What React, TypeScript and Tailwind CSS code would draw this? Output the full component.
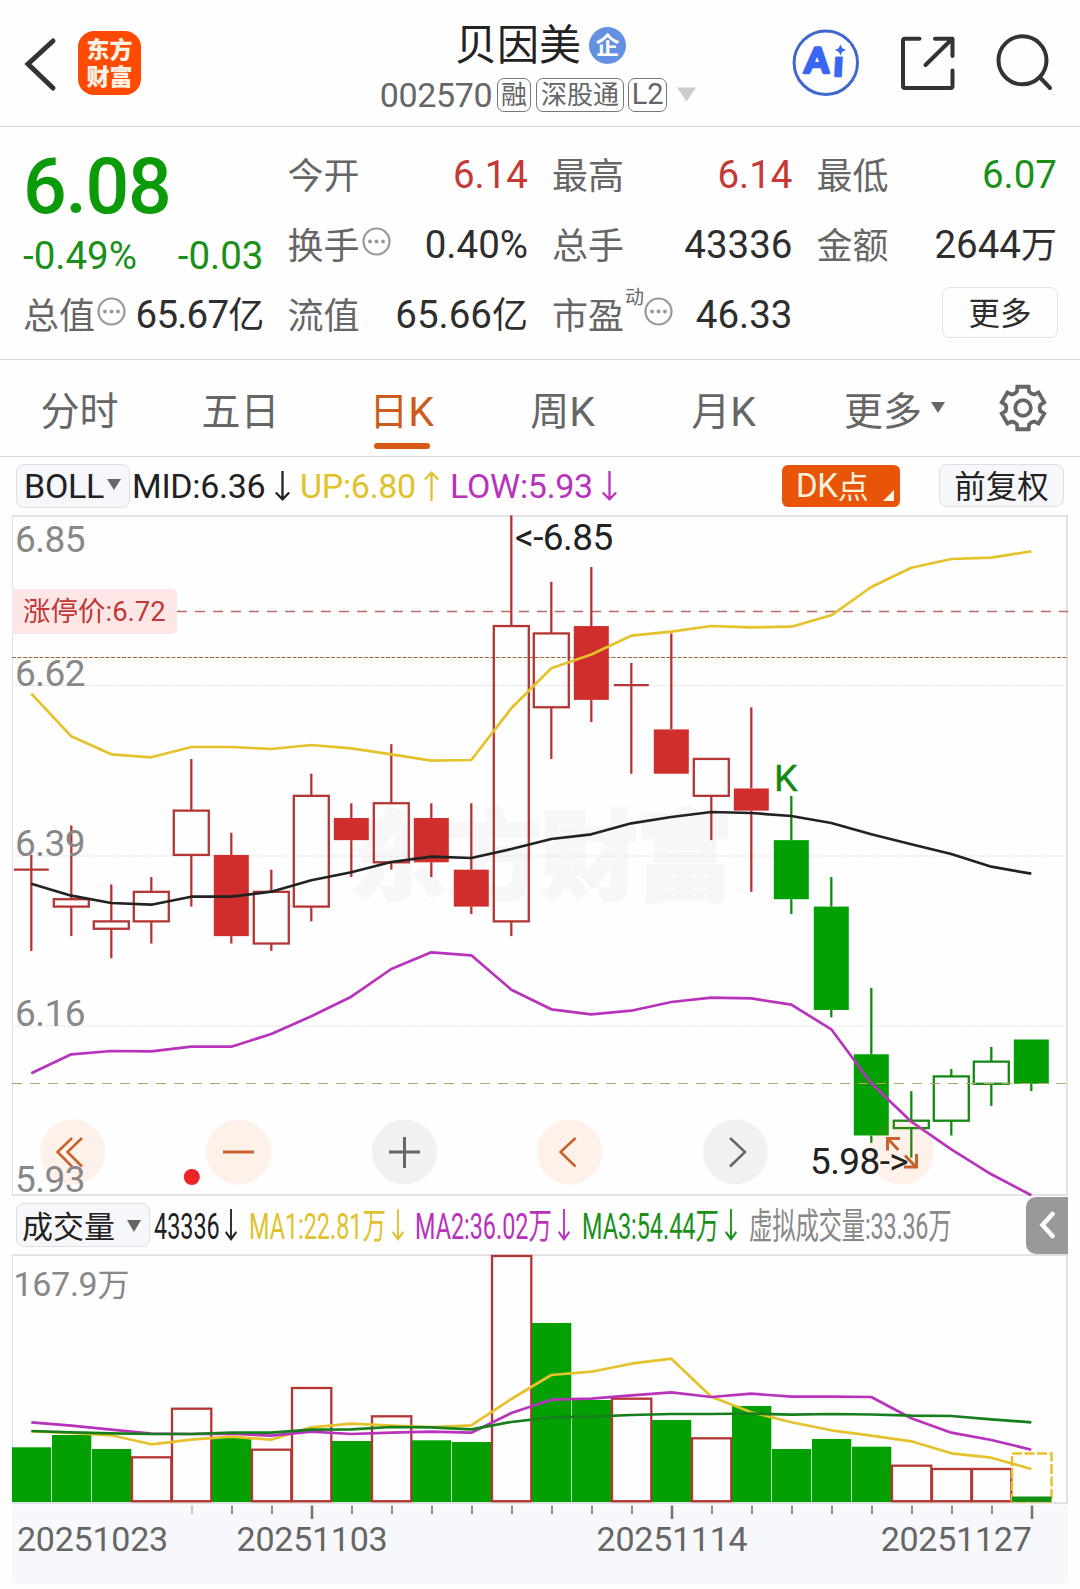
import type { ReactNode } from "react";

const RED = "#b43634";
const GREEN = "#148a14";
const YELLOW = "#e5c22c";
const PURPLE = "#b833bb";

type Candle = { o: number; h: number; l: number; c: number; tone: "red" | "green"; solid: boolean };

function candle(top: number, bottom: number, h: number, l: number, tone: "red" | "green", solid: boolean): Candle {
  return { o: top, c: bottom, h, l, tone, solid };
}

// body top, body bottom, high, low
const CANDLES: Candle[] = [
  candle(6.37, 6.37, 6.39, 6.26, "red", false),
  candle(6.33, 6.32, 6.43, 6.28, "red", false),
  candle(6.3, 6.29, 6.35, 6.25, "red", false),
  candle(6.34, 6.3, 6.36, 6.27, "red", false),
  candle(6.45, 6.39, 6.52, 6.32, "red", false),
  candle(6.39, 6.28, 6.42, 6.27, "red", true),
  candle(6.34, 6.27, 6.37, 6.26, "red", false),
  candle(6.47, 6.32, 6.5, 6.3, "red", false),
  candle(6.44, 6.41, 6.46, 6.36, "red", true),
  candle(6.46, 6.38, 6.54, 6.37, "red", false),
  candle(6.44, 6.38, 6.46, 6.36, "red", true),
  candle(6.37, 6.32, 6.46, 6.31, "red", true),
  candle(6.7, 6.3, 6.85, 6.28, "red", false),
  candle(6.69, 6.59, 6.76, 6.52, "red", false),
  candle(6.7, 6.6, 6.78, 6.57, "red", true),
  candle(6.62, 6.62, 6.65, 6.5, "red", false),
  candle(6.56, 6.5, 6.69, 6.5, "red", true),
  candle(6.52, 6.47, 6.52, 6.41, "red", false),
  candle(6.48, 6.45, 6.59, 6.34, "red", true),
  candle(6.41, 6.33, 6.47, 6.31, "green", true),
  candle(6.32, 6.18, 6.36, 6.17, "green", true),
  candle(6.12, 6.01, 6.21, 6.0, "green", true),
  candle(6.03, 6.02, 6.07, 5.98, "green", false),
  candle(6.09, 6.03, 6.1, 6.01, "green", false),
  candle(6.11, 6.08, 6.13, 6.05, "green", false),
  candle(6.14, 6.08, 6.14, 6.07, "green", true),
];

const UP = [693.7, 736.3, 754.3, 757.3, 747, 747, 749, 745, 748.3, 754.3, 760.7, 760, 708.3, 668.3, 654.5, 635.7, 631.7, 626, 627.3, 626.7, 615.3, 587, 567.7, 559, 557.7, 551.3];
const MID = [883.7, 895.7, 903, 904.7, 896.7, 896.7, 891.7, 880.3, 872.3, 862, 856.7, 858, 849, 839, 834.3, 823.3, 817, 812, 813, 816, 823, 834.3, 844.3, 854, 866.7, 873.7];
const LOW = [1073.3, 1054.3, 1051, 1051.3, 1046.7, 1046.7, 1034, 1016.3, 996.7, 969, 952.3, 955.3, 989.7, 1009.3, 1014.3, 1010.7, 1002, 997.7, 998.3, 1004.7, 1029.3, 1083.3, 1121.7, 1149.3, 1174.3, 1195.3];

const VOLUMES: { y: number; solid: boolean }[] = [
  { y: 1447.3, solid: true },
  { y: 1435, solid: true },
  { y: 1449, solid: true },
  { y: 1457.3, solid: false },
  { y: 1408.7, solid: false },
  { y: 1437, solid: true },
  { y: 1449.7, solid: false },
  { y: 1388, solid: false },
  { y: 1441, solid: true },
  { y: 1416.3, solid: false },
  { y: 1440.3, solid: true },
  { y: 1442, solid: true },
  { y: 1256, solid: false },
  { y: 1323, solid: true },
  { y: 1400, solid: true },
  { y: 1398.7, solid: false },
  { y: 1420, solid: true },
  { y: 1438.3, solid: false },
  { y: 1406, solid: true },
  { y: 1449, solid: true },
  { y: 1439, solid: true },
  { y: 1446.7, solid: true },
  { y: 1465.7, solid: false },
  { y: 1469, solid: false },
  { y: 1469, solid: false },
];

const MA1 = [1431.5, 1433, 1435.3, 1444.3, 1439.7, 1436.7, 1439.7, 1427.3, 1423.7, 1425.7, 1427, 1425.3, 1399, 1375, 1371.7, 1363.7, 1358.7, 1396.7, 1412.3, 1422.3, 1430.3, 1435.7, 1441.3, 1453.3, 1457.7, 1469];
const MA2 = [1422.3, 1425.7, 1429.7, 1433.7, 1434, 1433.7, 1435.7, 1431.7, 1434, 1432.7, 1431.7, 1432.7, 1413, 1399.7, 1398.7, 1395.3, 1392.3, 1397, 1393.7, 1396.7, 1396.7, 1397, 1418.3, 1432.7, 1440, 1449.7];
const MA3 = [1431, 1432.3, 1433.3, 1434, 1434, 1432.7, 1432.7, 1429.7, 1429.3, 1427, 1427.3, 1429.3, 1422, 1417.3, 1416.7, 1415, 1414, 1414, 1413.5, 1414.7, 1414, 1414.5, 1415.7, 1416, 1419.3, 1422.3];

const xAt = (i: number) => 31 + 40 * i;
const yAt = (price: number) => 515.3 + (6.85 - price) * 738.3;
const line = (ys: number[]) => ys.map((y, i) => `${xAt(i) + 0.3},${y}`).join(" ");

function Header() {
  return (
    <header className="flex h-[127px] items-center border-b border-[#d6d6d6]">
      <div className="flex w-[360px] items-center pl-6">
        <svg width="34" height="60" viewBox="24 33 34 60" fill="none" stroke="#333" strokeWidth="5" strokeLinecap="round">
          <path d="M53 41 28 64 53 88" />
        </svg>
        <div className="ml-5 flex h-16 w-[63px] flex-col items-center justify-center rounded-2xl bg-[#fe4a03] pt-px text-[23px] leading-[27px] font-black text-[#fff1e4]">
          <span>东方</span>
          <span>财富</span>
        </div>
      </div>
      <div className="flex w-[360px] flex-col items-center pt-[6px]">
        <div className="flex h-[50px] items-center gap-2 pt-[1px] pl-[1px]">
          <span className="text-[42px] leading-[50px] text-[#222]">贝因美</span>
          <span className="mb-px grid h-[37px] w-[37px] place-items-center rounded-full bg-[#6490e2] text-[24px] leading-none font-bold text-white">
            企
          </span>
        </div>
        <div className="mt-[7px] flex h-[34px] items-center pr-[3px] text-[#666]">
          <span className="mr-[5px] text-[34px] leading-[34px] tracking-[-0.4px]">002570</span>
          <Tag className="mr-[5px] w-[34px]">融</Tag>
          <Tag className="mr-1 w-[88px]">深股通</Tag>
          <Tag className="w-[39px] text-[29px]">L2</Tag>
          <svg className="ml-[9px]" width="21" height="15" viewBox="0 0 21 15" fill="#ccc">
            <path d="M1 .5h19L10.500 14.500z" />
          </svg>
        </div>
      </div>
      <div className="flex w-[360px] justify-end pr-6">
        <svg width="270" height="76" viewBox="786 25 270 76" fill="none">
          <circle cx="825.8" cy="62.700" r="31.700" stroke="#4068cc" strokeWidth="3" />
          <g transform="translate(826 62) skewX(-3) translate(-826 -62)" fontFamily="Lato" fontWeight="900" fill="#3a66f4" stroke="#3a66f4" strokeWidth="2.600" strokeLinejoin="round">
            <text x="804.500" y="73.500" fontSize="35">A</text>
            <text x="834" y="75.800" fontSize="36">i</text>
          </g>
          <path d="M831.500 43h18.500v13.500h-18.500z" fill="#fff" />
          <path d="m840.500 44.500 1.800 3.700 3.700 1.800-3.700 1.800-1.800 3.700-1.800-3.700-3.700-1.800 3.700-1.800z" fill="#3a66f4" />
          <g stroke="#333" strokeWidth="4" strokeLinecap="round" strokeLinejoin="round">
            <path d="M919.500 38.700h-14.500a2 2 0 0 0-2 2V86a2 2 0 0 0 2 2h45.500a2 2 0 0 0 2-2V70.500" />
            <path d="M935 38.700h17.500V56M951 40 925.500 65" />
            <circle cx="1022.500" cy="60.300" r="24" />
            <path d="M1040 77.500 1050 88" />
          </g>
        </svg>
      </div>
    </header>
  );
}

function Tag({ className, children }: { className: string; children: ReactNode }) {
  return (
    <span className={`grid h-[34px] place-items-center rounded-[7px] border border-[#777] text-[26px] leading-none ${className}`}>
      {children}
    </span>
  );
}

function Dots() {
  return (
    <svg className="-mt-[7px] ml-[2px] shrink-0" width="29" height="29" viewBox="0 0 29 29" fill="none">
      <circle cx="14.500" cy="14.500" r="13" stroke="#999" strokeWidth="2.200" />
      <g fill="#999">
        <circle cx="8" cy="14.500" r="2" />
        <circle cx="14.500" cy="14.500" r="2" />
        <circle cx="21" cy="14.500" r="2" />
      </g>
    </svg>
  );
}

function Stat({ label, value, tone = "text-[#2e2e2e]", sup, dots, tight }: { label: string; value: string; tone?: string; sup?: string; dots?: boolean; tight?: boolean }) {
  return (
    <div className="flex h-[70px] items-center">
      <span className="pt-[3px] text-[36px] text-[#666]">{label}</span>
      {sup && <span className="-mr-[2px] -mt-[36px] ml-[1px] text-[19px] text-[#666]">{sup}</span>}
      {dots && <Dots />}
      <span className={`ml-auto flex items-center text-[38.500px] whitespace-nowrap ${tight ? "tracking-[-0.800px]" : ""} ${tone}`}>
        {value.replace(/[亿万]/, "")}
        {/[亿万]/.test(value) && <span className="pt-[2px] text-[36px]">{value.slice(-1)}</span>}
      </span>
    </div>
  );
}

function Quote() {
  return (
    <section className="grid h-[233px] grid-cols-4 gap-x-6 border-b border-[#d6d6d6] pr-[23px] pl-[23px] pt-[13px] leading-none">
      <div>
        <div className="flex h-[92px] items-center pt-[3px] text-[77px] font-medium tracking-[-1.300px] text-[#0a9a0a]">6.08</div>
        <div className="flex h-[48px] items-center justify-between text-[38.500px] text-[#1a901a]">
          <span>-0.49%</span>
          <span>-0.03</span>
        </div>
        <Stat label="总值" value="65.67亿" dots tight />
      </div>
      <div>
        <Stat label="今开" value="6.14" tone="text-[#c63835]" />
        <Stat label="换手" value="0.40%" dots />
        <Stat label="流值" value="65.66亿" />
      </div>
      <div>
        <Stat label="最高" value="6.14" tone="text-[#c63835]" />
        <Stat label="总手" value="43336" />
        <Stat label="市盈" value="46.33" sup="动" dots />
      </div>
      <div>
        <Stat label="最低" value="6.07" tone="text-[#1a901a]" />
        <Stat label="金额" value="2644万" />
        <div className="-mr-px flex h-[65px] items-center justify-end">
          <button className="h-[51px] w-[116px] rounded-lg border border-[#e0e2e4] pt-[4px] text-[31.500px] text-[#2e2e2e]">更多</button>
        </div>
      </div>
    </section>
  );
}

// Six blunt teeth around a ring.
const GEAR = Array.from({ length: 6 }, (_, k) =>
  [
    [-30, 16.6],
    [-20, 17.6],
    [-15, 22],
    [15, 22],
    [20, 17.6],
  ].map(([deg, r]) => {
    const a = ((k * 60 - 90 + deg) * Math.PI) / 180;
    return `${(24 + r * Math.cos(a)).toFixed(2)},${(24 + r * Math.sin(a)).toFixed(2)}`;
  }),
).flat().join(" ");

function Tabs() {
  return (
    <nav className="flex h-[97px] items-center border-b border-[#d6d6d6] text-[39px] leading-none text-[#666]">
      {["分时", "五日", "日K", "周K", "月K"].map((t) => (
        <div key={t} className={`relative flex h-full w-[161px] items-center justify-center pt-[8px] pr-[2px] ${t === "日K" ? "text-[#cc5c1c]" : ""}`}>
          {t.replace("K", "")}
          {t.endsWith("K") && <span className="text-[41px]">K</span>}
          {t === "日K" && <span className="absolute bottom-[7px] left-[52px] h-[6px] w-[56px] rounded-full bg-[#d95a12]" />}
        </div>
      ))}
      <div className="ml-[39px] flex items-center gap-[9px] pt-[8px]">
        更多
        <svg className="-mt-[9px]" width="14" height="11" viewBox="0 0 14 11" fill="#666">
          <path d="M0 0h14L7 11z" />
        </svg>
      </div>
      <svg className="ml-[54px]" width="48" height="48" viewBox="0 0 48 48" fill="none" stroke="#666" strokeWidth="3.800">
        <polygon points={GEAR} />
        <circle cx="24" cy="24" r="7.800" />
      </svg>
    </nav>
  );
}

function Arrow({ up, narrow, className = "" }: { up?: boolean; narrow?: boolean; className?: string }) {
  return (
    <svg
      className={`shrink-0 ${up ? "rotate-180" : ""} ${className}`}
      width={narrow ? 12 : 15}
      height={narrow ? 32 : 30}
      viewBox="0 0 15 30"
      preserveAspectRatio="none"
      fill="none"
      stroke="currentColor"
      strokeWidth="2.300"
    >
      <path d="M7.500 0v28M.8 21.500l6.700 6.800 6.700-6.800" />
    </svg>
  );
}

function BollBar() {
  return (
    <div className="flex h-[58px] items-center pb-[1px] pl-4 text-[34px] leading-none tracking-[-0.300px] text-[#222]">
      <div className="flex h-[44px] w-[114px] items-center gap-[4px] rounded-lg border border-[#dcdfe3] bg-[#f6f7fa] pl-[7px]">
        BOLL
        <svg className="-ml-px -mt-[2px]" width="14" height="11" viewBox="0 0 14 11" fill="#666">
          <path d="M0 0h14L7 11z" />
        </svg>
      </div>
      <span className="ml-[1px] w-[144px] pl-[1px]">MID:6.36</span>
      <Arrow />
      <span className="ml-[10px] flex w-[124px] text-[#e0c22c]">UP:6.80</span>
      <Arrow up className="text-[#e0c22c]" />
      <span className="ml-[11px] w-[152px] text-[#b833bb]">LOW:5.93</span>
      <Arrow className="text-[#b833bb]" />
      <div className="ml-auto flex h-[42px] w-[118px] items-center rounded-[6px] bg-[#e85508] pl-[14px] text-[33px] text-[#fff3dc]">
        DK<span className="pt-[3px] text-[31px]">点</span>
        <svg className="mt-[20px] ml-auto mr-[6px]" width="11" height="11" viewBox="0 0 11 11" fill="#fff8e8">
          <path d="M11 0v11H0z" />
        </svg>
      </div>
      <div className="mr-[16px] ml-[39px] flex h-[43px] w-[125px] items-center justify-center rounded-lg border border-[#dcdfe3] bg-[#f6f7fa] pt-[5px] text-[31.500px] tracking-normal">
        前复权
      </div>
    </div>
  );
}

function CandleMark({ i, d }: { i: number; d: Candle }) {
  const x = xAt(i) + 0.3;
  const stroke = d.tone === "red" ? RED : GREEN;
  const top = yAt(d.o);
  const bottom = yAt(d.c);
  return (
    <g stroke={stroke} strokeWidth="2.300">
      {d.h > d.o && <path d={`M${x} ${yAt(d.h)}V${top}`} />}
      {d.l < d.c && <path d={`M${x} ${bottom}V${yAt(d.l)}`} />}
      {d.o === d.c ? (
        <path d={`M${x - 17.5} ${top}h35`} />
      ) : d.solid ? (
        <rect x={x - 17.5} y={top} width="35" height={bottom - top} fill={d.tone === "red" ? "#d02e2d" : "#02a002"} stroke="none" />
      ) : (
        <rect x={x - 17.5} y={top} width="35" height={bottom - top} fill="none" />
      )}
    </g>
  );
}

function PriceChart() {
  return (
    <svg className="block overflow-visible" width="1080" height="681" viewBox="0 515 1080 681" fill="none">
      <g fontFamily="'Noto Sans CJK SC'" fontWeight="900" fontSize="98" fill="#f7f7f7" stroke="#f7f7f7" strokeWidth="2">
        <text x="349" y="892" textLength="385">东方财富</text>
      </g>
      <g stroke="#dedede" strokeDasharray="2 1.500">
        <path d="M12 685.500H1067M12 856H1067M12 1026H1067" />
      </g>
      <path d="M12.500 516V1195" stroke="#e2e2e2" />
      <path d="M12 516H1067V1195H12" stroke="#e2e2e2" strokeWidth="2" />
      <path d="M12 657.500H1067" stroke="#a3673a" strokeDasharray="4 1.500" />
      <path d="M177 611.500H1068" stroke="#bd6a67" strokeWidth="1.300" strokeDasharray="10 8" />

      {CANDLES.map((d, i) => (
        <CandleMark key={i} i={i} d={d} />
      ))}
      <path d="M12 1083.500H1067" stroke="#b9a272" strokeDasharray="10 8" />
      <g strokeWidth="2.700" strokeLinejoin="round">
        <polyline points={line(UP)} stroke={YELLOW} />
        <polyline points={line(MID)} stroke="#222" />
        <polyline points={line(LOW)} stroke={PURPLE} />
      </g>

      {[72.7, 238.6, 404.5, 569.5, 735.4, 901.5].map((cx, i) => (
        <circle key={cx} cx={cx} cy="1152" r="32.500" fill={i === 2 || i === 4 ? "#888" : "#f26a22"} fillOpacity={i === 2 || i === 4 ? 0.11 : 0.09} />
      ))}
      <g stroke="#c8622c" strokeWidth="2.500">
        <path d="m72 1138-14.500 14 14.500 14.500M82 1138l-14.500 14 14.500 14.500" />
        <path d="M223 1152h31" strokeWidth="3" />
        <path d="m575.500 1138-15 14 15 14.500" />
        <path d="M900 1138.500h-12.500v12M888 1139l10.500 11M904 1167h12.500v-13M916 1167l-11-11.500" strokeWidth="3" />
      </g>
      <g stroke="#666">
        <path d="M389 1152h31M404.500 1137v31" strokeWidth="3" />
        <path d="m730 1138 15 14-15 14.500" strokeWidth="2.500" />
      </g>
      <circle cx="191.800" cy="1177" r="8" fill="#e92525" />

      <path d="M12 589H172a5 5 0 0 1 5 5V629a5 5 0 0 1-5 5H12z" fill="#fde7e6" />
      <text x="23" y="621" fontSize="27.500" fill="#c03936">涨停价:6.72</text>
      <g fontSize="37" letterSpacing="-0.500" fill="#888">
        <text x="15" y="552">6.85</text>
        <text x="15" y="686">6.62</text>
        <text x="15" y="855.500">6.39</text>
        <text x="15" y="1026">6.16</text>
        <text x="15" y="1191.500">5.93</text>
      </g>
      <g fontSize="37" letterSpacing="-0.600" fill="#222">
        <text x="515" y="550">&lt;-6.85</text>
        <text x="810" y="1173.500">5.98-&gt;</text>
      </g>
      <text x="774" y="790.700" fontSize="37.500" fill={GREEN} stroke={GREEN} strokeWidth=".4">K</text>
    </svg>
  );
}

function Squeezed({ width, className, children }: { width: string; className?: string; children: ReactNode }) {
  return (
    <span className={`shrink-0 pt-[3px] whitespace-nowrap ${width} ${className ?? ""}`}>
      <span className="inline-block origin-left scale-x-[0.65]">{children}</span>
    </span>
  );
}

function VolumeBar() {
  return (
    <div className="flex h-[58px] items-center pl-4 text-[36px] leading-none text-[#222]">
      <div className="flex h-[44px] w-[134px] shrink-0 items-center rounded-lg border border-[#dcdfe3] bg-[#f6f7fa] pt-[5px] pl-[5px] text-[31px]">
        成交量
        <svg className="-mt-[3px] ml-[12px]" width="14" height="12" viewBox="0 0 14 12" fill="#666">
          <path d="M0 0h14L7 12z" />
        </svg>
      </div>
      <Squeezed width="w-[71px] ml-1">43336</Squeezed>
      <Arrow narrow />
      <Squeezed width="w-[143px] ml-[12px]" className="text-[#e0c22c]">MA1:22.81万</Squeezed>
      <Arrow narrow className="text-[#e0c22c]" />
      <Squeezed width="w-[143px] ml-[11px]" className="text-[#b833bb]">MA2:36.02万</Squeezed>
      <Arrow narrow className="text-[#b833bb]" />
      <Squeezed width="w-[143px] ml-[12px]" className="text-[#1a901a]">MA3:54.44万</Squeezed>
      <Arrow narrow className="text-[#1a901a]" />
      <Squeezed width="w-[204px] ml-[12px]" className="tracking-[-0.300px] text-[#888]">虚拟成交量:33.36万</Squeezed>
      <div className="mr-3 ml-auto grid h-[57px] w-[42px] place-items-center rounded-l-[10px] bg-[#999]">
        <svg width="16" height="28" viewBox="0 0 16 28" fill="none" stroke="#fff" strokeWidth="4.500" strokeLinecap="round">
          <path d="M13.500 3 3.500 14l10 11" />
        </svg>
      </div>
    </div>
  );
}

function VolumeChart() {
  return (
    <svg className="block" width="1080" height="335" viewBox="0 1254 1080 335" fill="none">
      <path d="M12 1505H1068V1583.500H12z" fill="#f7f8fb" />
      <path d="M12.500 1255V1503" stroke="#e2e2e2" />
      <path d="M12 1255H1067V1503H12" stroke="#e2e2e2" strokeWidth="2" />
      {VOLUMES.map((v, i) =>
        v.solid ? (
          <rect key={i} x={12 + 40 * i} y={v.y} width="39.300" height={1502 - v.y} fill="#02a002" />
        ) : (
          <rect key={i} x={12 + 40 * i} y={v.y} width="39.300" height={1501.2 - v.y} stroke={RED} strokeWidth="2.300" />
        ),
      )}
      <rect x="1012" y="1453.500" width="39.500" height="48" stroke={YELLOW} strokeWidth="2.500" strokeDasharray="10 2.500" />
      <rect x="1012" y="1496.500" width="39.500" height="5.500" fill="#159015" />
      <g strokeWidth="2.700" strokeLinejoin="round">
        <polyline points={line(MA1)} stroke={YELLOW} />
        <polyline points={line(MA2)} stroke={PURPLE} />
        <polyline points={line(MA3)} stroke="#167f1c" />
      </g>
      {Array.from({ length: 22 }, (_, k) => k + 4).map((i) => {
        const major = i === 7 || i === 16 || i === 25;
        return <path key={i} d={`M${32 + 40 * i} 1505.500V${major ? 1519 : 1514}`} stroke={i === 4 ? "#bbb" : "#777"} strokeWidth={major ? 2.6 : 1.6} />;
      })}
      <text x="13.500" y="1296" fontSize="34" letterSpacing="-0.300" fill="#888">
        167.9<tspan fontSize="32">万</tspan>
      </text>
      <g fontSize="34" letterSpacing="-0.250" fill="#666">
        <text x="17" y="1551">20251023</text>
        <text x="312" y="1551" textAnchor="middle">20251103</text>
        <text x="672" y="1551" textAnchor="middle">20251114</text>
        <text x="1031.500" y="1551" textAnchor="end">20251127</text>
      </g>
    </svg>
  );
}

export default function App() {
  return (
    <div className="h-[1589px] w-[1080px] overflow-hidden bg-[#fefefe] font-[Roboto,'Noto_Sans_CJK_SC',sans-serif]">
      <Header />
      <Quote />
      <Tabs />
      <BollBar />
      <PriceChart />
      <VolumeBar />
      <VolumeChart />
    </div>
  );
}
